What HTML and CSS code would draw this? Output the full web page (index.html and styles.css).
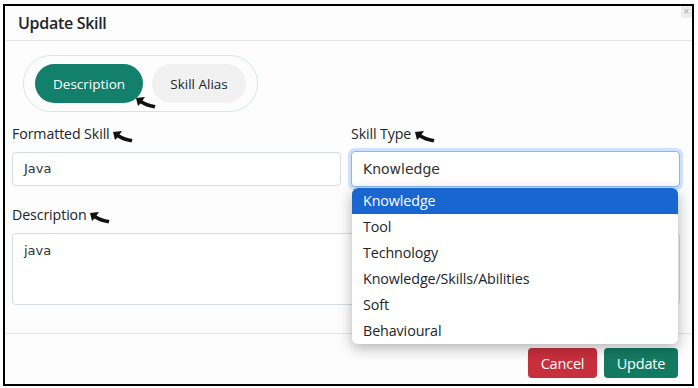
FILE: index.html
```html
<!DOCTYPE html>
<html lang="en">

<head>
    <meta charset="UTF-8">
    <title>Update Skill</title>
    <link rel="stylesheet" href="styles.css">
</head>

<body>

    <div class="modal">
        <div class="modal-header">
            <h5>Update Skill</h5>
            <button class="close-btn">×</button>
        </div>

        <div class="modal-body">
            <!-- tab switcher -->
            <div class="pill-tabs">
                <button class="pill active">Description</button>
                <button class="pill">Skill Alias</button>
                <svg class="mark mark-tab" width="20" height="12" viewBox="0 0 20 12">
                    <path d="M0 1 L9 0 L6.5 3.5 C10 5.5 14 7 19.5 8 L18.5 11.5 C12 10.5 8 8.5 4.5 6.5 L2 9 Z" fill="#111" />
                </svg>
            </div>

            <div class="form-grid">
                <div class="field">
                    <label>Formatted Skill
                        <svg class="mark" width="20" height="12" viewBox="0 0 20 12">
                            <path d="M0 1 L9 0 L6.5 3.5 C10 5.5 14 7 19.5 8 L18.5 11.5 C12 10.5 8 8.5 4.5 6.5 L2 9 Z" fill="#111" />
                        </svg>
                    </label>
                    <div class="input">Java</div>
                </div>

                <div class="field">
                    <label>Skill Type
                        <svg class="mark" width="20" height="12" viewBox="0 0 20 12">
                            <path d="M0 1 L9 0 L6.5 3.5 C10 5.5 14 7 19.5 8 L18.5 11.5 C12 10.5 8 8.5 4.5 6.5 L2 9 Z" fill="#111" />
                        </svg>
                    </label>
                    <div class="select-wrap">
                        <div class="input focused">Knowledge</div>
                        <ul class="dropdown">
                            <li class="selected">Knowledge</li>
                            <li>Tool</li>
                            <li>Technology</li>
                            <li>Knowledge/Skills/Abilities</li>
                            <li>Soft</li>
                            <li>Behavioural</li>
                        </ul>
                    </div>
                </div>

                <div class="field wide">
                    <label>Description
                        <svg class="mark" width="20" height="12" viewBox="0 0 20 12">
                            <path d="M0 1 L9 0 L6.5 3.5 C10 5.5 14 7 19.5 8 L18.5 11.5 C12 10.5 8 8.5 4.5 6.5 L2 9 Z" fill="#111" />
                        </svg>
                    </label>
                    <div class="input textarea">java</div>
                </div>
            </div>
        </div>

        <div class="modal-footer">
            <button class="btn btn-cancel">Cancel</button>
            <button class="btn btn-update">Update</button>
        </div>
    </div>

</body>

</html>
```

FILE: styles.css
```css
body {
    margin: 0;
    padding: 4px 4px 2px 3px;
    background: #fff;
    font-family: "Open Sans", "Noto Sans", sans-serif;
    color: #212529;
}

.modal {
    position: relative;
    height: 382px;
    box-sizing: border-box;
    border: 2px solid #000;
    background: #fdfdfd;
    display: flex;
    flex-direction: column;
}

.modal-header {
    height: 35px;
    box-sizing: border-box;
    border-bottom: 1px solid #e6e6e6;
    display: flex;
    align-items: center;
    padding-left: 13px;
}

.modal-header h5 {
    margin: 0;
    font-size: 16px;
    font-weight: 600;
    letter-spacing: -0.3px;
}

.close-btn {
    position: absolute;
    top: 0;
    right: 0;
    width: 11px;
    height: 12px;
    padding: 0;
    border: none;
    background: #ececec;
    color: #aaa;
    font-size: 10px;
    line-height: 10px;
    border-radius: 0 0 0 3px;
}

.modal-body {
    flex: 1;
    padding-top: 14px;
}

.pill-tabs {
    position: relative;
    display: inline-flex;
    gap: 9px;
    margin-left: 18px;
    padding: 8px 11px;
    border: 1px solid #d3e8e1;
    border-radius: 28px;
}

.pill {
    height: 39px;
    border: none;
    border-radius: 20px;
    padding: 0 18px;
    font-family: "Open Sans", sans-serif;
    font-size: 13.5px;
    background: #f1f1f1;
    color: #212529;
}

.pill.active {
    background: #12806a;
    color: #fff;
}

.pill:first-child {
    width: 108px;
}

.pill:nth-child(2) {
    width: 94px;
}

.mark {
    vertical-align: -4px;
}

.mark-tab {
    position: absolute;
    left: 112px;
    top: 41px;
}

.form-grid {
    display: grid;
    grid-template-columns: 1fr 1fr;
    column-gap: 10px;
    row-gap: 18px;
    margin-top: 12px;
    padding: 0 12px 0 7px;
}

.field.wide {
    grid-column: 1 / 3;
}

.field label {
    display: block;
    height: 20px;
    line-height: 20px;
    font-size: 14.2px;
    margin-bottom: 8px;
    letter-spacing: -0.1px;
}

.input {
    height: 34px;
    box-sizing: border-box;
    border: 1px solid #d6dbe0;
    border-radius: 4px;
    background: #fff;
    padding: 0 11px;
    line-height: 32px;
    font-family: "DejaVu Sans", sans-serif;
    font-size: 13px;
    color: #333;
}

.input.focused {
    height: 36px;
    margin-top: -1px;
    line-height: 34px;
    border-color: #86b7fe;
    box-shadow: 0 0 0 3px rgba(13, 110, 253, 0.2);
    font-size: 14px;
}

.input.textarea {
    height: 72px;
    line-height: 34px;
    padding-top: 0;
}

.select-wrap {
    position: relative;
}

.dropdown {
    position: absolute;
    z-index: 2;
    top: 37px;
    left: 1px;
    right: 2px;
    margin: 0;
    padding: 0;
    list-style: none;
    background: #fff;
    border-radius: 6px;
    overflow: hidden;
    box-shadow: 0 4px 14px rgba(0, 0, 0, 0.3);
}

.dropdown li {
    height: 26px;
    line-height: 26px;
    padding-left: 11px;
    font-size: 14.3px;
    letter-spacing: -0.1px;
}

.dropdown li.selected {
    background: #1a66d1;
    color: #fff;
}

.modal-footer {
    margin-top: 28px;
    border-top: 1px solid #e6e6e6;
    display: flex;
    justify-content: flex-end;
    gap: 7px;
    padding: 14px 14px 6px 0;
}

.btn {
    height: 30px;
    border: none;
    border-radius: 4px;
    color: #fff;
    font-family: "Open Sans", sans-serif;
    font-size: 14.5px;
    letter-spacing: -0.2px;
}

.btn-cancel {
    width: 69px;
    background: #c82f3d;
}

.btn-update {
    width: 74px;
    background: #137a62;
}
```
